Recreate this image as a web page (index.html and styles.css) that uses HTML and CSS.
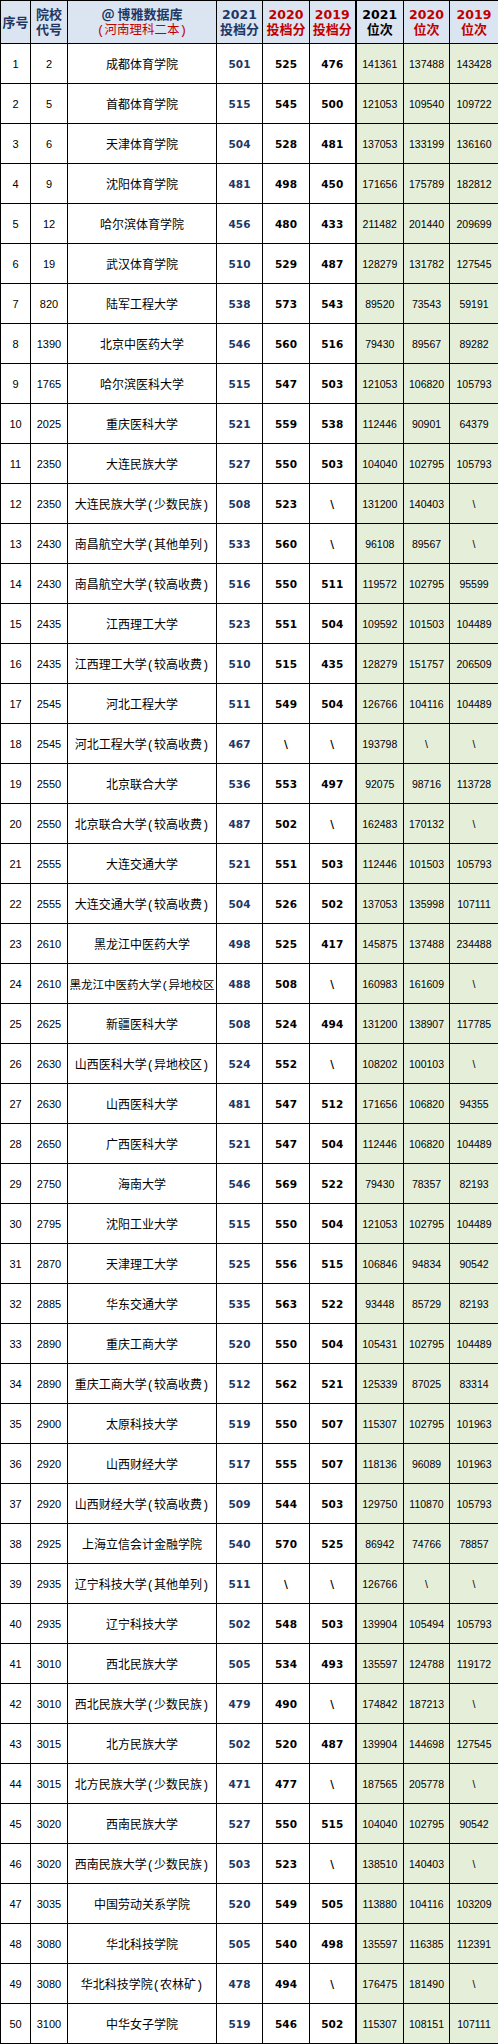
FILE: index.html
```html
<!DOCTYPE html>
<html lang="zh">
<head>
<meta charset="utf-8">
<title>博雅数据库 河南理科二本</title>
<link rel="stylesheet" href="styles.css">
</head>
<body>
<table class="tbl">
<colgroup>
<col class="c1"><col class="c2"><col class="c3"><col class="c4"><col class="c5"><col class="c6"><col class="c7"><col class="c8"><col class="c9">
</colgroup>
<thead>
<tr>
<th class="h-navy">序号</th>
<th class="h-navy">院校<br>代号</th>
<th class="h-title"><span class="t-main">@ 博雅数据库</span><br><span class="t-sub">(河南理科二本)</span></th>
<th class="h-navy"><span class="h-num">2021</span><br>投档分</th>
<th class="h-red"><span class="h-num">2020</span><br>投档分</th>
<th class="h-red"><span class="h-num">2019</span><br>投档分</th>
<th class="h-black"><span class="h-num">2021</span><br>位次</th>
<th class="h-red"><span class="h-num">2020</span><br>位次</th>
<th class="h-red"><span class="h-num">2019</span><br>位次</th>
</tr>
</thead>
<tbody>
<tr><td>1</td><td>2</td><td>成都体育学院</td><td>501</td><td>525</td><td>476</td><td>141361</td><td>137488</td><td>143428</td></tr>
<tr><td>2</td><td>5</td><td>首都体育学院</td><td>515</td><td>545</td><td>500</td><td>121053</td><td>109540</td><td>109722</td></tr>
<tr><td>3</td><td>6</td><td>天津体育学院</td><td>504</td><td>528</td><td>481</td><td>137053</td><td>133199</td><td>136160</td></tr>
<tr><td>4</td><td>9</td><td>沈阳体育学院</td><td>481</td><td>498</td><td>450</td><td>171656</td><td>175789</td><td>182812</td></tr>
<tr><td>5</td><td>12</td><td>哈尔滨体育学院</td><td>456</td><td>480</td><td>433</td><td>211482</td><td>201440</td><td>209699</td></tr>
<tr><td>6</td><td>19</td><td>武汉体育学院</td><td>510</td><td>529</td><td>487</td><td>128279</td><td>131782</td><td>127545</td></tr>
<tr><td>7</td><td>820</td><td>陆军工程大学</td><td>538</td><td>573</td><td>543</td><td>89520</td><td>73543</td><td>59191</td></tr>
<tr><td>8</td><td>1390</td><td>北京中医药大学</td><td>546</td><td>560</td><td>516</td><td>79430</td><td>89567</td><td>89282</td></tr>
<tr><td>9</td><td>1765</td><td>哈尔滨医科大学</td><td>515</td><td>547</td><td>503</td><td>121053</td><td>106820</td><td>105793</td></tr>
<tr><td>10</td><td>2025</td><td>重庆医科大学</td><td>521</td><td>559</td><td>538</td><td>112446</td><td>90901</td><td>64379</td></tr>
<tr><td>11</td><td>2350</td><td>大连民族大学</td><td>527</td><td>550</td><td>503</td><td>104040</td><td>102795</td><td>105793</td></tr>
<tr><td>12</td><td>2350</td><td>大连民族大学(少数民族)</td><td>508</td><td>523</td><td>\</td><td>131200</td><td>140403</td><td>\</td></tr>
<tr><td>13</td><td>2430</td><td>南昌航空大学(其他单列)</td><td>533</td><td>560</td><td>\</td><td>96108</td><td>89567</td><td>\</td></tr>
<tr><td>14</td><td>2430</td><td>南昌航空大学(较高收费)</td><td>516</td><td>550</td><td>511</td><td>119572</td><td>102795</td><td>95599</td></tr>
<tr><td>15</td><td>2435</td><td>江西理工大学</td><td>523</td><td>551</td><td>504</td><td>109592</td><td>101503</td><td>104489</td></tr>
<tr><td>16</td><td>2435</td><td>江西理工大学(较高收费)</td><td>510</td><td>515</td><td>435</td><td>128279</td><td>151757</td><td>206509</td></tr>
<tr><td>17</td><td>2545</td><td>河北工程大学</td><td>511</td><td>549</td><td>504</td><td>126766</td><td>104116</td><td>104489</td></tr>
<tr><td>18</td><td>2545</td><td>河北工程大学(较高收费)</td><td>467</td><td>\</td><td>\</td><td>193798</td><td>\</td><td>\</td></tr>
<tr><td>19</td><td>2550</td><td>北京联合大学</td><td>536</td><td>553</td><td>497</td><td>92075</td><td>98716</td><td>113728</td></tr>
<tr><td>20</td><td>2550</td><td>北京联合大学(较高收费)</td><td>487</td><td>502</td><td>\</td><td>162483</td><td>170132</td><td>\</td></tr>
<tr><td>21</td><td>2555</td><td>大连交通大学</td><td>521</td><td>551</td><td>503</td><td>112446</td><td>101503</td><td>105793</td></tr>
<tr><td>22</td><td>2555</td><td>大连交通大学(较高收费)</td><td>504</td><td>526</td><td>502</td><td>137053</td><td>135998</td><td>107111</td></tr>
<tr><td>23</td><td>2610</td><td>黑龙江中医药大学</td><td>498</td><td>525</td><td>417</td><td>145875</td><td>137488</td><td>234488</td></tr>
<tr><td>24</td><td>2610</td><td class="name-long">黑龙江中医药大学(异地校区</td><td>488</td><td>508</td><td>\</td><td>160983</td><td>161609</td><td>\</td></tr>
<tr><td>25</td><td>2625</td><td>新疆医科大学</td><td>508</td><td>524</td><td>494</td><td>131200</td><td>138907</td><td>117785</td></tr>
<tr><td>26</td><td>2630</td><td>山西医科大学(异地校区)</td><td>524</td><td>552</td><td>\</td><td>108202</td><td>100103</td><td>\</td></tr>
<tr><td>27</td><td>2630</td><td>山西医科大学</td><td>481</td><td>547</td><td>512</td><td>171656</td><td>106820</td><td>94355</td></tr>
<tr><td>28</td><td>2650</td><td>广西医科大学</td><td>521</td><td>547</td><td>504</td><td>112446</td><td>106820</td><td>104489</td></tr>
<tr><td>29</td><td>2750</td><td>海南大学</td><td>546</td><td>569</td><td>522</td><td>79430</td><td>78357</td><td>82193</td></tr>
<tr><td>30</td><td>2795</td><td>沈阳工业大学</td><td>515</td><td>550</td><td>504</td><td>121053</td><td>102795</td><td>104489</td></tr>
<tr><td>31</td><td>2870</td><td>天津理工大学</td><td>525</td><td>556</td><td>515</td><td>106846</td><td>94834</td><td>90542</td></tr>
<tr><td>32</td><td>2885</td><td>华东交通大学</td><td>535</td><td>563</td><td>522</td><td>93448</td><td>85729</td><td>82193</td></tr>
<tr><td>33</td><td>2890</td><td>重庆工商大学</td><td>520</td><td>550</td><td>504</td><td>105431</td><td>102795</td><td>104489</td></tr>
<tr><td>34</td><td>2890</td><td>重庆工商大学(较高收费)</td><td>512</td><td>562</td><td>521</td><td>125339</td><td>87025</td><td>83314</td></tr>
<tr><td>35</td><td>2900</td><td>太原科技大学</td><td>519</td><td>550</td><td>507</td><td>115307</td><td>102795</td><td>101963</td></tr>
<tr><td>36</td><td>2920</td><td>山西财经大学</td><td>517</td><td>555</td><td>507</td><td>118136</td><td>96089</td><td>101963</td></tr>
<tr><td>37</td><td>2920</td><td>山西财经大学(较高收费)</td><td>509</td><td>544</td><td>503</td><td>129750</td><td>110870</td><td>105793</td></tr>
<tr><td>38</td><td>2925</td><td>上海立信会计金融学院</td><td>540</td><td>570</td><td>525</td><td>86942</td><td>74766</td><td>78857</td></tr>
<tr><td>39</td><td>2935</td><td>辽宁科技大学(其他单列)</td><td>511</td><td>\</td><td>\</td><td>126766</td><td>\</td><td>\</td></tr>
<tr><td>40</td><td>2935</td><td>辽宁科技大学</td><td>502</td><td>548</td><td>503</td><td>139904</td><td>105494</td><td>105793</td></tr>
<tr><td>41</td><td>3010</td><td>西北民族大学</td><td>505</td><td>534</td><td>493</td><td>135597</td><td>124788</td><td>119172</td></tr>
<tr><td>42</td><td>3010</td><td>西北民族大学(少数民族)</td><td>479</td><td>490</td><td>\</td><td>174842</td><td>187213</td><td>\</td></tr>
<tr><td>43</td><td>3015</td><td>北方民族大学</td><td>502</td><td>520</td><td>487</td><td>139904</td><td>144698</td><td>127545</td></tr>
<tr><td>44</td><td>3015</td><td>北方民族大学(少数民族)</td><td>471</td><td>477</td><td>\</td><td>187565</td><td>205778</td><td>\</td></tr>
<tr><td>45</td><td>3020</td><td>西南民族大学</td><td>527</td><td>550</td><td>515</td><td>104040</td><td>102795</td><td>90542</td></tr>
<tr><td>46</td><td>3020</td><td>西南民族大学(少数民族)</td><td>503</td><td>523</td><td>\</td><td>138510</td><td>140403</td><td>\</td></tr>
<tr><td>47</td><td>3035</td><td>中国劳动关系学院</td><td>520</td><td>549</td><td>505</td><td>113880</td><td>104116</td><td>103209</td></tr>
<tr><td>48</td><td>3080</td><td>华北科技学院</td><td>505</td><td>540</td><td>498</td><td>135597</td><td>116385</td><td>112391</td></tr>
<tr><td>49</td><td>3080</td><td>华北科技学院(农林矿)</td><td>478</td><td>494</td><td>\</td><td>176475</td><td>181490</td><td>\</td></tr>
<tr><td>50</td><td>3100</td><td>中华女子学院</td><td>519</td><td>546</td><td>502</td><td>115307</td><td>108151</td><td>107111</td></tr>
</tbody>
</table>
</body>
</html>
```
FILE: styles.css
```css
html, body {
  margin: 0;
  padding: 0;
  background: #ffffff;
}

.tbl {
  border-collapse: collapse;
  table-layout: fixed;
  width: 498px;
  font-family: "Liberation Sans", "Noto Sans CJK SC", sans-serif;
  color: #000;
}

.c1 { width: 30px; }
.c2 { width: 37px; }
.c3 { width: 149px; }
.c4 { width: 46px; }
.c5 { width: 47px; }
.c6 { width: 46px; }
.c7 { width: 48px; }
.c8 { width: 46px; }
.c9 { width: 49px; }

.tbl th,
.tbl td {
  border: 1px solid #000;
  padding: 0;
  text-align: center;
  vertical-align: middle;
  white-space: nowrap;
  overflow: hidden;
}

.tbl thead tr { height: 43px; }
.tbl tbody tr { height: 40px; }

.tbl th {
  background: #dbe5f1;
  font-family: "DejaVu Sans", "Noto Sans CJK SC", sans-serif;
  font-weight: bold;
  font-size: 13px;
  line-height: 15px;
}

.h-navy { color: #1f3864; }
.h-red { color: #c00000; }
.h-black { color: #000; }

.h-num {
  font-family: "DejaVu Sans", sans-serif;
  font-size: 12.5px;
}

.h-title { font-weight: bold; }
.t-main {
  color: #1f3864;
  font-family: "Noto Sans CJK SC", sans-serif;
  font-size: 13px;
}
.t-sub {
  color: #c00000;
  font-weight: normal;
  font-family: "Liberation Mono", "Noto Sans CJK SC", monospace;
  font-size: 12.5px;
}

.tbl td {
  font-size: 11px;
}

.tbl td:nth-child(1),
.tbl td:nth-child(2) {
  font-family: "Liberation Sans", sans-serif;
  font-size: 11px;
}

.tbl td:nth-child(3) {
  font-family: "Liberation Mono", "Noto Sans CJK SC", monospace;
  font-size: 12px;
}

.tbl td.name-long {
  font-size: 11.5px;
}

.tbl td:nth-child(4),
.tbl td:nth-child(5),
.tbl td:nth-child(6) {
  font-family: "DejaVu Sans", sans-serif;
  font-weight: bold;
  font-size: 10.5px;
}

.tbl td:nth-child(4) { color: #1f3864; }

.tbl td:nth-child(7),
.tbl td:nth-child(8),
.tbl td:nth-child(9) {
  background: #e4eed9;
  font-family: "Liberation Sans", sans-serif;
  font-size: 10.5px;
}

.tbl th:nth-child(7),
.tbl td:nth-child(7) {
  border-left: 2px solid #000;
}
```
